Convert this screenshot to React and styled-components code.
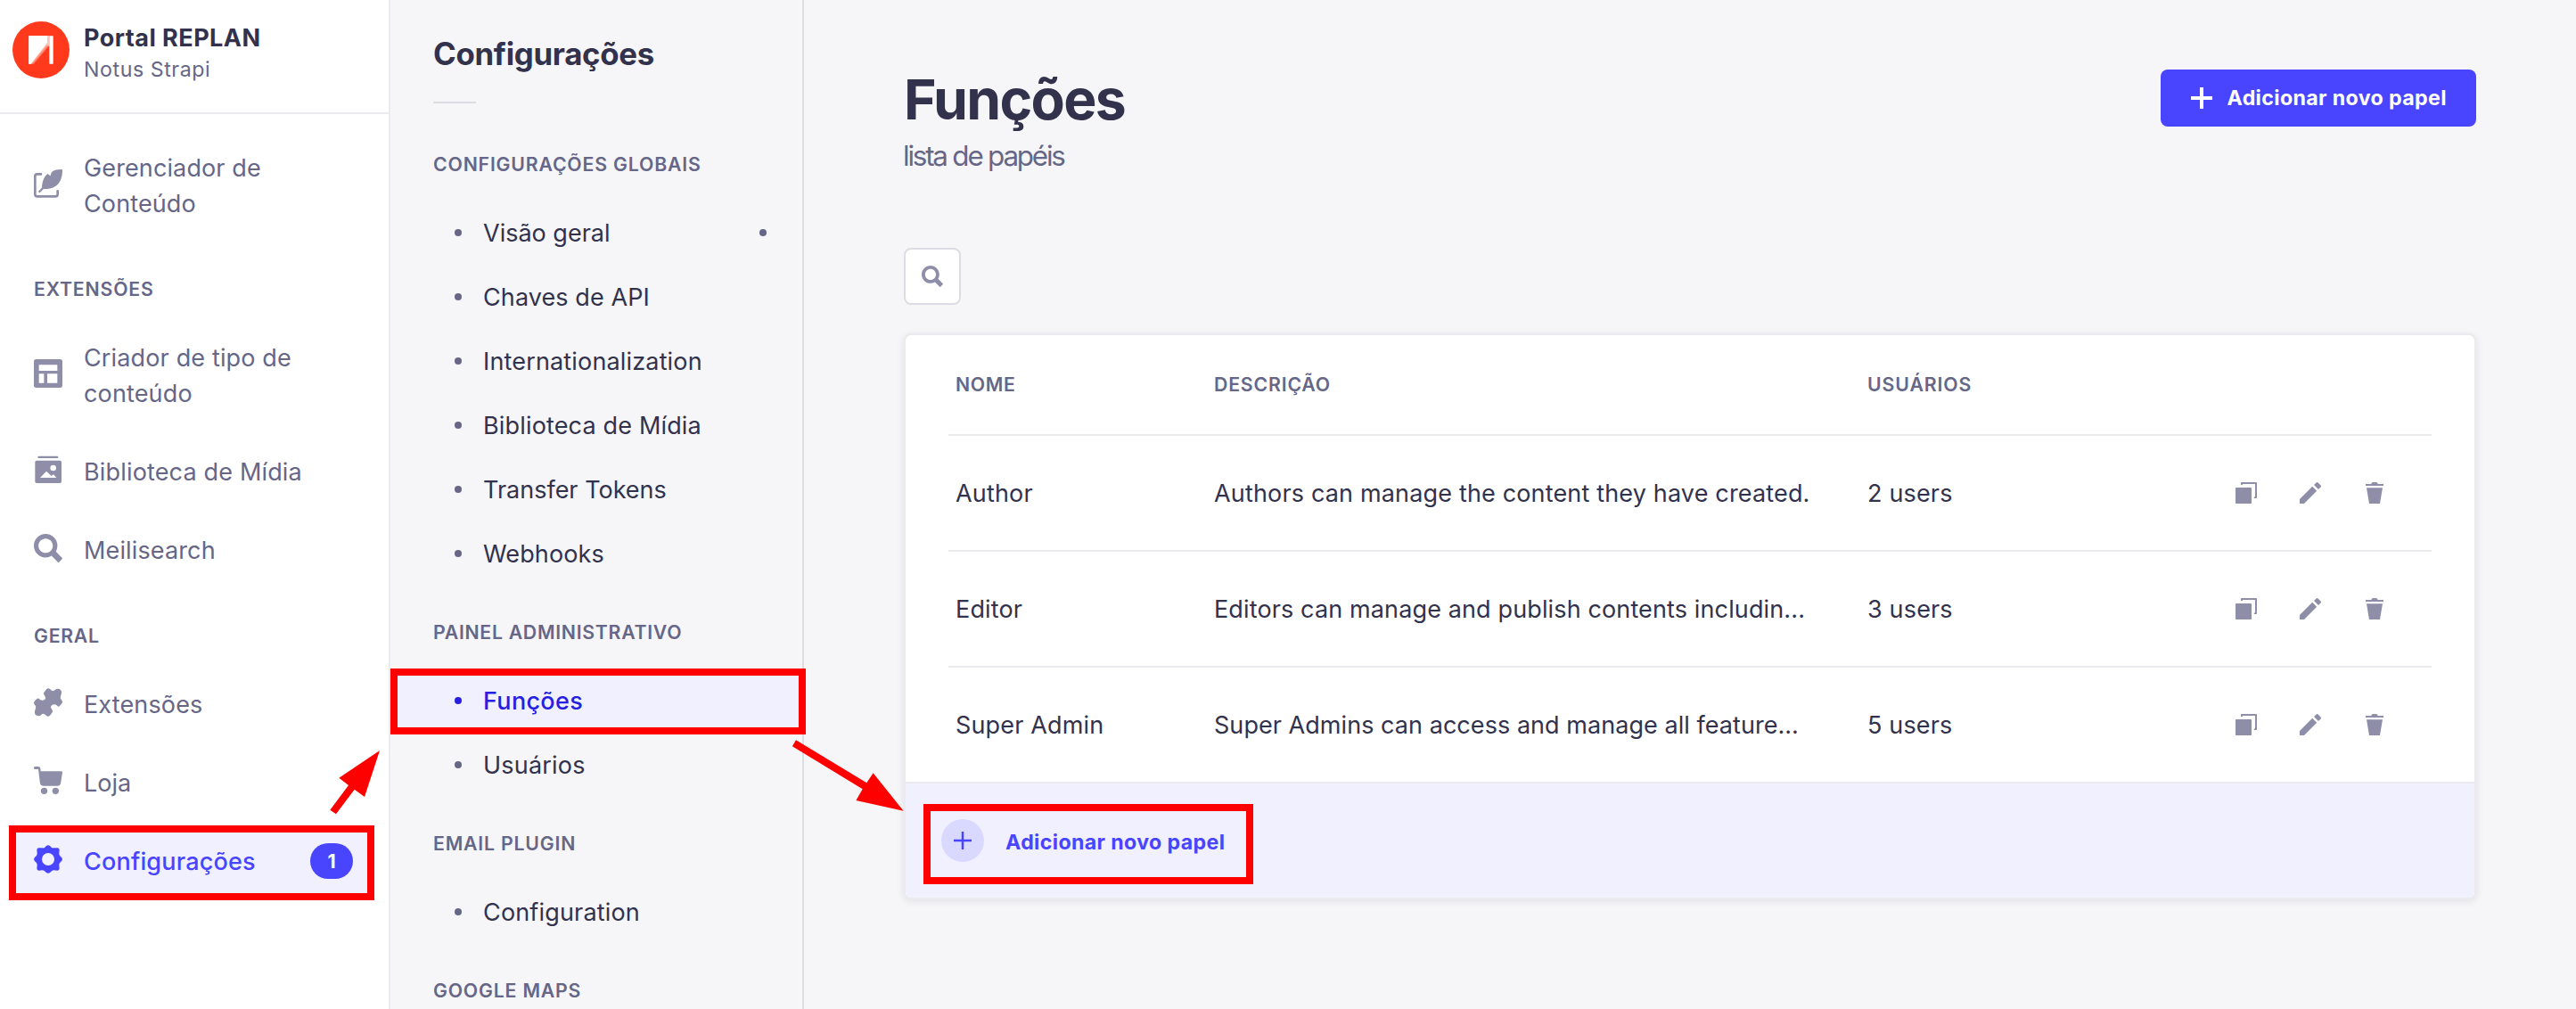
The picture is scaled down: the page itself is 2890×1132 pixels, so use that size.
import React from "react";
import styled, { createGlobalStyle } from "styled-components";

const color = {
  ink: "#32324d",
  muted: "#666687",
  icon: "#8e8ea9",
  line: "#eaeaef",
  lineStrong: "#dcdce4",
  canvas: "#f6f6f9",
  primary: "#4945ff",
  primaryDark: "#271fe0",
  primarySoft: "#f0f0ff",
  primaryTint: "#d9d8ff",
  mark: "#ff0000",
};

const GlobalStyle = createGlobalStyle`
  *, *::before, *::after { box-sizing: border-box; }
  body {
    margin: 0;
    background: ${color.canvas};
    color: ${color.ink};
    font-family: Inter, "Liberation Sans", sans-serif;
    overflow: hidden;
  }
`;

const Page = styled.div`
  position: relative;
  display: flex;
  width: 2890px;
  height: 1132px;
  overflow: hidden;
`;

/* ---------- text ---------- */

const Body = styled.span`
  font-size: 27px;
  line-height: 40px;
  font-weight: ${(p) => (p.$strong ? 550 : 400)};
  letter-spacing: ${(p) => p.$track ?? 0.006}em;
  transform: translateY(1px);
`;

const Sigma = styled.div`
  font-size: 21.25px;
  line-height: 32px;
  font-weight: 620;
  letter-spacing: ${(p) => p.$track ?? 0.038}em;
  text-transform: uppercase;
  color: ${color.muted};
`;

const ButtonText = styled.span`
  font-size: 23.2px;
  line-height: 32px;
  font-weight: 650;
  letter-spacing: 0.0155em;
  white-space: nowrap;
`;

/* ---------- main navigation ---------- */

const Nav = styled.nav`
  flex: none;
  width: 438px;
  background: #fff;
  border-right: 2px solid ${color.line};
`;

const Brand = styled.header`
  display: flex;
  gap: 16px;
  height: 128px;
  padding: 24px 14px 0;
  border-bottom: 2px solid ${color.line};
`;

const BrandText = styled.div`
  padding-top: 1px;
`;

const BrandName = styled.div`
  font-size: 27px;
  line-height: 36px;
  font-weight: 650;
  letter-spacing: 0.0175em;
`;

const BrandPlace = styled.div`
  font-size: 23.2px;
  line-height: 35px;
  letter-spacing: 0.0241em;
  color: ${color.muted};
`;

const NavList = styled.div`
  padding-top: ${(p) => (p.$first ? 20 : 21)}px;
`;

const NavSection = styled.section`
  padding-top: 32px;
  & > ${Sigma} { padding-left: 38px; }
`;

const NavLink = styled.a`
  display: flex;
  align-items: center;
  margin: 0 20px 8px 16px;
  padding: 20px 22px;
  border-radius: 8px;
  color: ${(p) => (p.$active ? color.primary : color.muted)};
  background: ${(p) => (p.$active ? color.primarySoft : "transparent")};
  & > svg {
    flex: none;
    width: 32px;
    height: 32px;
    margin: 0 24px 4px 0;
    color: ${(p) => (p.$active ? color.primary : color.icon)};
    overflow: visible;
  }
  & > ${Body} { flex: 1; }
`;

const Badge = styled.span`
  flex: none;
  display: flex;
  align-items: center;
  justify-content: center;
  width: 48px;
  height: 40px;
  margin-right: -2px;
  border-radius: 20px;
  background: ${color.primary};
  color: #fff;
  font-size: 21.25px;
  font-weight: 650;
`;

/* ---------- settings navigation ---------- */

const SubNav = styled.aside`
  flex: none;
  width: 464px;
  padding-top: 38px;
  border-right: 2px solid ${color.lineStrong};
`;

const SubNavTitle = styled.h2`
  margin: 0 0 32px 48px;
  font-size: 34.8px;
  line-height: 44px;
  font-weight: 650;
  letter-spacing: -0.009em;
`;

const Rule = styled.div`
  width: 48px;
  height: 2px;
  margin: 0 0 52px 48px;
  background: ${color.lineStrong};
`;

const SubSection = styled.section`
  margin-bottom: 36px;
  & > ${Sigma} { padding-left: 48px; margin-bottom: 25px; }
`;

const SubLink = styled.a`
  display: flex;
  align-items: center;
  gap: 24px;
  height: 72px;
  padding: 0 40px 0 72px;
  color: ${(p) => (p.$active ? color.primaryDark : color.ink)};
  background: ${(p) => (p.$active ? color.primarySoft : "transparent")};
  & > ${Body} { flex: 1; }
`;

const Dot = styled.i`
  width: 8px;
  height: 8px;
  border-radius: 50%;
  background: ${(p) => (p.$active ? color.primaryDark : color.muted)};
`;

/* ---------- content ---------- */

const Main = styled.main`
  flex: 1;
  display: flex;
  flex-direction: column;
  padding: 71px 112px 0;
`;

const PageHead = styled.header`
  display: flex;
  justify-content: space-between;
  align-items: flex-start;
  height: 128px;
  margin-bottom: 79px;
`;

const PageTitle = styled.h1`
  margin: 0;
  font-size: 62.5px;
  line-height: 80px;
  font-weight: 650;
  letter-spacing: -0.0265em;
`;

const PageSubtitle = styled.p`
  margin: 0 0 0 -1px;
  font-size: 31.4px;
  line-height: 48px;
  letter-spacing: -0.0705em;
  color: ${color.muted};
`;

const PrimaryButton = styled.button`
  display: flex;
  align-items: center;
  gap: 16.5px;
  width: 354px;
  height: 64px;
  margin-top: 7px;
  padding: 0 0 0 34px;
  border: 0;
  border-radius: 8px;
  background: ${color.primary};
  color: #fff;
  font-family: inherit;
  & > svg { width: 24px; height: 24px; }
`;

const SearchButton = styled.button`
  display: flex;
  align-items: center;
  justify-content: center;
  width: 64px;
  height: 64px;
  margin-bottom: 32px;
  padding: 0;
  border: 2px solid ${color.lineStrong};
  border-radius: 8px;
  background: #fff;
  color: ${color.icon};
  & > svg { width: 24px; height: 24px; }
`;

const Card = styled.section`
  border: 2px solid ${color.line};
  border-radius: 8px;
  background: #fff;
  box-shadow: 0 2px 8px rgba(33, 33, 52, 0.1);
`;

const Table = styled.div`
  padding: 0 48px;
`;

const Row = styled.div`
  display: grid;
  grid-template-columns: 290px 733px 1fr auto;
  align-items: center;
  height: ${(p) => (p.$head ? 113 : p.$last ? 128 : 130)}px;
  padding: 0 52px ${(p) => (p.$head ? 1 : 0)}px 8px;
  border-bottom: ${(p) => (p.$last ? "0" : `2px solid ${color.line}`)};
`;

const Actions = styled.div`
  display: flex;
  gap: 48px;
  color: ${color.icon};
  & > svg { width: 24px; height: 24px; }
`;

const CardFooter = styled.footer`
  display: flex;
  align-items: center;
  gap: 24px;
  height: 130px;
  padding-left: 40px;
  border-top: 2px solid ${color.line};
  border-radius: 0 0 6px 6px;
  background: ${color.primarySoft};
  color: ${color.primary};
  & > ${ButtonText} { padding-top: 3px; }
`;

const PlusDisc = styled.span`
  display: flex;
  align-items: center;
  justify-content: center;
  width: 48px;
  height: 48px;
  border-radius: 50%;
  background: ${color.primaryTint};
  & > svg { width: 20px; height: 20px; }
`;

/* ---------- tutorial marks laid over the page ---------- */

const MarkBox = styled.div`
  position: absolute;
  left: ${(p) => p.$x}px;
  top: ${(p) => p.$y}px;
  width: ${(p) => p.$w}px;
  height: ${(p) => p.$h}px;
  border: 8px solid ${color.mark};
`;

const MarkArrows = styled.svg`
  position: absolute;
  left: 0;
  top: 0;
  width: 1100px;
  height: 1132px;
  fill: ${color.mark};
  pointer-events: none;
`;

/* ---------- icons ---------- */

const Logo = () => (
  <svg width="64" height="64" viewBox="0 0 192 192">
    <defs>
      <linearGradient id="fold" gradientUnits="userSpaceOnUse" x1="86" y1="104" x2="98" y2="114">
        <stop offset="0" stopColor="#fff" />
        <stop offset="0.4" stopColor="#ffb3a5" />
        <stop offset="1" stopColor="#ff5a3c" />
      </linearGradient>
    </defs>
    <circle cx="96" cy="96" r="96" fill="#ff3a1c" />
    <path fill="url(#fold)" d="M55 49h68v34L72 143H55z" />
    <path fill="#ffc4b9" d="M117 49h7v34h-7z" />
    <path fill="#fff" d="M55 49h62v22L62 143h-7zM124 49h13v94h-13z" />
  </svg>
);

const WriteIcon = () => (
  <svg viewBox="0 0 96 96">
    <path
      d="M24 16H11Q4 16 4 23V84Q4 91 11 91H73Q80 91 80 84V73"
      fill="none"
      stroke="currentColor"
      strokeWidth="8"
      strokeLinecap="round"
    />
    <path d="M19 75L46 46" stroke="currentColor" strokeWidth="7" strokeLinecap="round" />
    <path
      fill="currentColor"
      d="M93 0Q96 0 96 3C96 36 82 67 36 66L27 65C27 44 33 25 46 15L56 22Q57 14 60 9C68 2 82 0 93 0z"
    />
  </svg>
);

const LayoutIcon = () => (
  <svg viewBox="0 0 96 96" fill="currentColor" fillRule="evenodd">
    <path d="M8 0H88Q96 0 96 8V88Q96 96 88 96H8Q0 96 0 88V8Q0 0 8 0zM17 19V39H79V19zM17 49V80H34V49zM45 49V80H79V49z" />
  </svg>
);

const MediaIcon = () => (
  <svg viewBox="0 0 96 96" fill="currentColor" fillRule="evenodd">
    <rect x="13" y="2" width="69" height="7" rx="3.5" />
    <path d="M9 17H88Q93 17 93 22V88Q93 93 88 93H9Q4 93 4 88V22Q4 17 9 17zM65 32A10 10 0 1 0 65 52A10 10 0 1 0 65 32zM21 75H76L66 64L59 69L42 53z" />
  </svg>
);

const SearchIcon = () => (
  <svg viewBox="0 0 24 24" fill="currentColor" fillRule="evenodd">
    <path d="M23.813 20.163l-5.3-5.367a9.792 9.792 0 001.312-4.867C19.825 4.455 15.375 0 9.913 0 4.45 0 0 4.455 0 9.929c0 5.473 4.45 9.928 9.912 9.928a9.757 9.757 0 005.007-1.4l5.275 5.35a.634.634 0 00.913 0l2.706-2.737a.641.641 0 000-.907zM9.91 3.867c3.338 0 6.05 2.718 6.05 6.061s-2.712 6.061-6.05 6.061c-3.337 0-6.05-2.718-6.05-6.06 0-3.344 2.713-6.062 6.05-6.062z" />
  </svg>
);

const PuzzleIcon = () => (
  <svg viewBox="0 0 96 96" fill="currentColor">
    <path d="M34 14L43 3Q48-2 54 3L60 8Q66 12 72 5C80-1 95 3 93 17C92 24 88 28 90 35L95 43Q98 48 94 52L87 60Q82 65 77 58C70 52 58 55 57 64C57 70 66 74 62 82L54 92Q48 98 42 93L36 88Q30 84 24 91C16 97 1 93 3 79C4 72 8 68 6 61L1 53Q-2 48 2 44L10 36Q15 32 20 38C27 44 39 41 39 33C40 26 30 22 34 14z" />
  </svg>
);

const CartIcon = () => (
  <svg viewBox="0 0 96 96" fill="currentColor">
    <path d="M3 0H15Q21 0 22 6L23 16H93Q96 16 96 20L90 58Q88 65 81 65H31Q23 65 21 58L15 9H3Q0 9 0 4.500Q0 0 3 0z" />
    <circle cx="34.500" cy="82" r="11" />
    <circle cx="73" cy="82" r="11" />
  </svg>
);

const CogIcon = () => (
  <svg viewBox="0 0 96 96" fill="currentColor" fillRule="evenodd">
    <path d="M42 3Q48-2 54 3L60 9Q63 11 67 10L79 10Q86 10 86 17L85 28Q84 33 88 37L94 43Q98 48 94 53L88 59Q84 62 85 68L86 79Q86 86 79 86L67 85Q63 85 60 88L54 93Q48 98 42 93L36 88Q33 85 28 85L17 86Q10 86 10 79L11 68Q12 63 8 59L2 53Q-2 48 2 43L8 37Q12 33 11 28L10 17Q10 10 17 10L28 10Q33 11 36 9zM48 27A21 21 0 1 0 48 69A21 21 0 1 0 48 27z" />
  </svg>
);

const PlusIcon = ({ bar = 4 }) => (
  <svg viewBox="0 0 24 24" fill="currentColor">
    <rect x="0" y={12 - bar / 2} width="24" height={bar} />
    <rect x={12 - bar / 2} y="0" width={bar} height="24" />
  </svg>
);

const CopyIcon = () => (
  <svg viewBox="0 0 24 24" fill="currentColor">
    <rect x="0" y="6" width="18" height="18" rx="0.8" />
    <path d="M6 .8Q6 0 6.800 0H23.200Q24 0 24 .8V17.200Q24 18 23.200 18H21.300Q20.600 18 20.600 17.200Q20.600 16.500 21.300 16.500H22V2H8V2.600Q8 3.300 7 3.300Q6 3.300 6 2.600z" />
  </svg>
);

const PencilIcon = () => (
  <svg viewBox="0 0 24 24" fill="currentColor">
    <path d="M23.604 3.514c.528.528.528 1.36 0 1.887l-2.622 2.607-4.99-4.99L18.6.396a1.322 1.322 0 011.887 0l3.118 3.118zM0 24v-4.99l14.2-14.2 4.99 4.99L4.99 24H0z" />
  </svg>
);

const TrashIcon = () => (
  <svg viewBox="0 0 24 24" fill="currentColor">
    <path d="M3.236 6.149a.2.2 0 00-.197.233L6 24h12l2.96-17.618a.2.2 0 00-.196-.233H3.236zM21.8 1.983c.11 0 .2.09.2.2v1.584a.2.2 0 01-.2.2H2.2a.2.2 0 01-.2-.2V2.183c0-.11.09-.2.2-.2h5.511c.9 0 1.631-1.09 1.631-1.983h5.316c0 .894.73 1.983 1.631 1.983H21.8z" />
  </svg>
);

/* ---------- data ---------- */

const extensionLinks = [
  { label: "Criador de tipo de conteúdo", icon: LayoutIcon, track: 0.0053 },
  { label: "Biblioteca de Mídia", icon: MediaIcon, track: 0.006 },
  { label: "Meilisearch", icon: SearchIcon, track: 0.005 },
];

const generalLinks = [
  { label: "Extensões", icon: PuzzleIcon, track: 0.005 },
  { label: "Loja", icon: CartIcon, track: 0 },
  { label: "Configurações", icon: CogIcon, track: 0.0065, active: true, badge: 1 },
];

const settings = [
  {
    title: "Configurações globais",
    track: 0.0385,
    links: [
      { label: "Visão geral", track: 0, notice: true },
      { label: "Chaves de API", track: 0.0035 },
      { label: "Internationalization" },
      { label: "Biblioteca de Mídia", track: 0.006 },
      { label: "Transfer Tokens", track: 0 },
      { label: "Webhooks", track: 0.004 },
    ],
  },
  {
    title: "Painel administrativo",
    track: 0.0335,
    links: [
      { label: "Funções", track: 0.012, active: true },
      { label: "Usuários", track: 0.0075 },
    ],
  },
  { title: "Email plugin", track: 0.038, links: [{ label: "Configuration" }] },
  { title: "Google Maps", links: [] },
];

const roles = [
  { name: "Author", description: "Authors can manage the content they have created.", users: "2 users" },
  { name: "Editor", description: "Editors can manage and publish contents includin...", users: "3 users", track: 0.0048 },
  { name: "Super Admin", description: "Super Admins can access and manage all feature...", users: "5 users", track: 0.0018 },
];

const MainLink = ({ label, icon: Icon, track, active, badge }) => (
  <NavLink $active={active}>
    <Icon />
    <Body $strong={active} $track={track}>{label}</Body>
    {badge && <Badge>{badge}</Badge>}
  </NavLink>
);

export default function App() {
  return (
    <Page>
      <GlobalStyle />
      <Nav>
        <Brand>
          <Logo />
          <BrandText>
            <BrandName>Portal REPLAN</BrandName>
            <BrandPlace>Notus Strapi</BrandPlace>
          </BrandText>
        </Brand>
        <NavList $first>
          <MainLink label="Gerenciador de Conteúdo" icon={WriteIcon} track={0.0045} />
        </NavList>
        <NavSection>
          <Sigma $track={0.039}>Extensões</Sigma>
          <NavList>
            {extensionLinks.map((link) => <MainLink key={link.label} {...link} />)}
          </NavList>
        </NavSection>
        <NavSection>
          <Sigma $track={0.034}>Geral</Sigma>
          <NavList>
            {generalLinks.map((link) => <MainLink key={link.label} {...link} />)}
          </NavList>
        </NavSection>
      </Nav>

      <SubNav>
        <SubNavTitle>Configurações</SubNavTitle>
        <Rule />
        {settings.map((section) => (
          <SubSection key={section.title}>
            <Sigma $track={section.track}>{section.title}</Sigma>
            {section.links.map((link) => (
              <SubLink key={link.label} $active={link.active}>
                <Dot $active={link.active} />
                <Body $strong={link.active} $track={link.track}>{link.label}</Body>
                {link.notice && <Dot />}
              </SubLink>
            ))}
          </SubSection>
        ))}
      </SubNav>

      <Main>
        <PageHead>
          <div>
            <PageTitle>Funções</PageTitle>
            <PageSubtitle>lista de papéis</PageSubtitle>
          </div>
          <PrimaryButton>
            <PlusIcon />
            <ButtonText>Adicionar novo papel</ButtonText>
          </PrimaryButton>
        </PageHead>
        <SearchButton aria-label="Buscar"><SearchIcon /></SearchButton>
        <Card>
          <Table>
            <Row $head>
              <Sigma $track={0.03}>Nome</Sigma>
              <Sigma $track={0.039}>Descrição</Sigma>
              <Sigma $track={0.043}>Usuários</Sigma>
            </Row>
            {roles.map((role, i) => (
              <Row key={role.name} $last={i === roles.length - 1}>
                <Body $track={0.006}>{role.name}</Body>
                <Body $track={role.track}>{role.description}</Body>
                <Body>{role.users}</Body>
                <Actions>
                  <CopyIcon />
                  <PencilIcon />
                  <TrashIcon />
                </Actions>
              </Row>
            ))}
          </Table>
          <CardFooter>
            <PlusDisc><PlusIcon bar={3} /></PlusDisc>
            <ButtonText>Adicionar novo papel</ButtonText>
          </CardFooter>
        </Card>
      </Main>

      <MarkBox $x={10} $y={926} $w={410} $h={84} />
      <MarkBox $x={438} $y={750} $w={466} $h={74} />
      <MarkBox $x={1036} $y={902} $w={370} $h={90} />
      <MarkArrows viewBox="0 0 1100 1132">
        <polygon points="426,842 380.3,872.7 391,881 370.3,908.7 377,913.3 397.7,885.7 409,894" />
        <polygon points="1013.6,909.7 979.6,867.3 972.3,878.3 893,830.3 888.9,837.3 967.7,885.3 960.4,898" />
      </MarkArrows>
    </Page>
  );
}
